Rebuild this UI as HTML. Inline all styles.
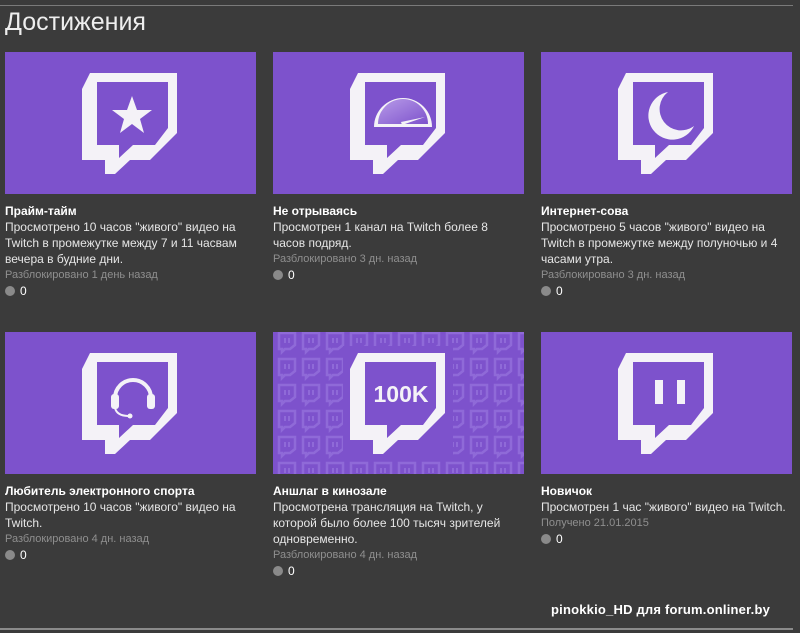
<!DOCTYPE html>
<html><head><meta charset="utf-8"><style>
body{margin:0;width:800px;height:633px;background:#3b3b3b;font-family:"Liberation Sans",sans-serif;position:relative;overflow:hidden;color:#fff}
.top{position:absolute;left:0;top:5px;width:793px;height:1px;background:#7a7a7a}
.bot{position:absolute;left:0;top:628px;width:793px;height:2px;background:#8a8a8a}
h1{position:absolute;left:5px;top:8px;margin:0;font-weight:normal;font-size:25px;color:#eee}
.card{position:absolute;width:251px}
.card>div{width:244px}
.img{width:251px;height:142px;background:#7d52cc;display:block}
.t{font-weight:bold;font-size:12px;margin-top:9px;line-height:16px}
.d{font-size:12px;line-height:16px;color:#e6e6e6}
.u{font-size:11px;line-height:16px;color:#8f8f8f}
.c{font-size:12px;line-height:16px;display:flex;align-items:center}
.c i{display:inline-block;width:10px;height:10px;border-radius:50%;background:#8a8a8a;margin-right:5px}
.foot{position:absolute;left:551px;top:602px;font-weight:bold;font-size:13px;color:#fff;letter-spacing:.2px}
</style></head><body>
<div class="top"></div>
<h1>Достижения</h1>

<div class="card" style="left:5px;top:52px">
<svg class="img" viewBox="0 0 251 142"><rect width="251" height="142" fill="#7d52cc"/>
<path fill="#f4f2f7" fill-rule="evenodd" d="M77,37 L85,21 L172,21 L172,81 L145,108 L125,108 L110,122 L100,122 L100,108 L77,108 Z M92,30 L163,30 L163,76 L150,93 L128,93 L114,106 L114,93 L92,93 Z"/>
<polygon fill="#f4f2f7" points="127,44 132,58 147,58 135,67 139,81 127,72 115,81 119,67 107,58 122,58"/></svg>
<div class="t">Прайм-тайм</div>
<div class="d">Просмотрено 10 часов "живого" видео на Twitch в промежутке между 7 и 11 часвам вечера в будние дни.</div>
<div class="u">Разблокировано 1 день назад</div>
<div class="c"><i></i>0</div></div>

<div class="card" style="left:273px;top:52px">
<svg class="img" viewBox="0 0 251 142"><defs><linearGradient id="g" x1="0" y1="0" x2="1" y2="1"><stop offset="0" stop-color="#b89be8"/><stop offset="1" stop-color="#7d52cc"/></linearGradient></defs><rect width="251" height="142" fill="#7d52cc"/>
<path fill="#f4f2f7" fill-rule="evenodd" d="M77,37 L85,21 L172,21 L172,81 L145,108 L125,108 L110,122 L100,122 L100,108 L77,108 Z M92,30 L163,30 L163,76 L150,93 L128,93 L114,106 L114,93 L92,93 Z"/>
<path fill="#f4f2f7" d="M101,75 A29,29 0 0 1 159,75 Z"/><path fill="url(#g)" d="M105,72 A25,25 0 0 1 155,72 Z"/>
<path fill="#f4f2f7" d="M128,70 L152,65 L129,73 Z"/></svg>
<div class="t">Не отрываясь</div>
<div class="d" style="width:230px">Просмотрен 1 канал на Twitch более 8 часов подряд.</div>
<div class="u">Разблокировано 3 дн. назад</div>
<div class="c"><i></i>0</div></div>

<div class="card" style="left:541px;top:52px">
<svg class="img" viewBox="0 0 251 142"><rect width="251" height="142" fill="#7d52cc"/>
<path fill="#f4f2f7" fill-rule="evenodd" d="M77,37 L85,21 L172,21 L172,81 L145,108 L125,108 L110,122 L100,122 L100,108 L77,108 Z M92,30 L163,30 L163,76 L150,93 L128,93 L114,106 L114,93 L92,93 Z"/>
<path fill="#f4f2f7" d="M127,40 A24,24 0 1 0 153,74 A19,19 0 0 1 127,40 Z"/></svg>
<div class="t">Интернет-сова</div>
<div class="d">Просмотрено 5 часов "живого" видео на Twitch в промежутке между полуночью и 4 часами утра.</div>
<div class="u">Разблокировано 3 дн. назад</div>
<div class="c"><i></i>0</div></div>

<div class="card" style="left:5px;top:332px">
<svg class="img" viewBox="0 0 251 142"><rect width="251" height="142" fill="#7d52cc"/>
<path fill="#f4f2f7" fill-rule="evenodd" d="M77,37 L85,21 L172,21 L172,81 L145,108 L125,108 L110,122 L100,122 L100,108 L77,108 Z M92,30 L163,30 L163,76 L150,93 L128,93 L114,106 L114,93 L92,93 Z"/>
<path fill="none" stroke="#f4f2f7" stroke-width="4" d="M110,66 A18,18 0 0 1 146,66"/>
<rect x="106" y="62" width="8" height="15" rx="3" fill="#f4f2f7"/><rect x="142" y="62" width="8" height="15" rx="3" fill="#f4f2f7"/>
<path fill="none" stroke="#f4f2f7" stroke-width="2" d="M110,76 Q112,84 124,84"/><circle cx="125" cy="84" r="2.5" fill="#f4f2f7"/></svg>
<div class="t">Любитель электронного спорта</div>
<div class="d">Просмотрено 10 часов "живого" видео на Twitch.</div>
<div class="u">Разблокировано 4 дн. назад</div>
<div class="c"><i></i>0</div></div>

<div class="card" style="left:273px;top:332px">
<svg class="img" viewBox="0 0 251 142"><defs><pattern id="p" width="24" height="26" patternUnits="userSpaceOnUse" x="2" y="-3"><path fill="none" stroke="#8f6ad8" stroke-width="2.5" d="M4,4 L20,4 L20,16 L15,20 L10,20 L7,23 L7,20 L4,20 Z"/><path stroke="#8f6ad8" stroke-width="2" d="M10,9 V14 M14,9 V14"/></pattern></defs>
<rect width="251" height="142" fill="#7d52cc"/><rect width="251" height="142" fill="url(#p)"/>
<path fill="#7d52cc" d="M70,14 H180 V128 H70 Z"/>
<path fill="#f4f2f7" fill-rule="evenodd" d="M77,37 L85,21 L172,21 L172,81 L145,108 L125,108 L110,122 L100,122 L100,108 L77,108 Z M92,30 L163,30 L163,76 L150,93 L128,93 L114,106 L114,93 L92,93 Z"/>
<text x="128" y="70" text-anchor="middle" font-family="Liberation Sans" font-weight="bold" font-size="23" fill="#f4f2f7">100K</text></svg>
<div class="t">Аншлаг в кинозале</div>
<div class="d">Просмотрена трансляция на Twitch, у которой было более 100 тысяч зрителей одновременно.</div>
<div class="u">Разблокировано 4 дн. назад</div>
<div class="c"><i></i>0</div></div>

<div class="card" style="left:541px;top:332px">
<svg class="img" viewBox="0 0 251 142"><rect width="251" height="142" fill="#7d52cc"/>
<path fill="#f4f2f7" fill-rule="evenodd" d="M77,37 L85,21 L172,21 L172,81 L145,108 L125,108 L110,122 L100,122 L100,108 L77,108 Z M92,30 L163,30 L163,76 L150,93 L128,93 L114,106 L114,93 L92,93 Z"/>
<rect x="114" y="48" width="8" height="24" fill="#f4f2f7"/><rect x="136" y="48" width="8" height="24" fill="#f4f2f7"/></svg>
<div class="t">Новичок</div>
<div class="d" style="width:260px;white-space:nowrap">Просмотрен 1 час "живого" видео на Twitch.</div>
<div class="u">Получено 21.01.2015</div>
<div class="c"><i></i>0</div></div>

<div class="foot">pinokkio_HD для forum.onliner.by</div>
<div class="bot"></div>
</body></html>
